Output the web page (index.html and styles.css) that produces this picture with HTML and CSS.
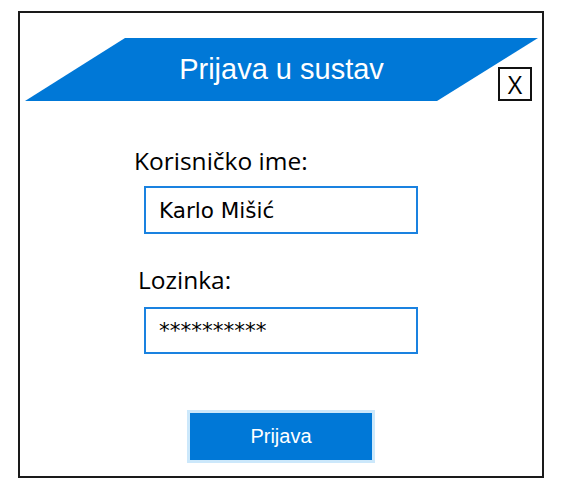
FILE: index.html
```html
<!DOCTYPE html>
<html lang="hr">
<head>
<meta charset="utf-8">
<title>Prijava u sustav</title>
<link rel="stylesheet" href="styles.css">
</head>
<body>
<div class="frame">
  <div class="header"><span class="title">Prijava u sustav</span></div>
  <button class="close" type="button">X</button>
  <label class="label label-user" for="user">Korisničko ime:</label>
  <input class="field" id="user" type="text" value="Karlo Mišić" readonly>
  <label class="label label-pass" for="pass">Lozinka:</label>
  <input class="field field-pass" id="pass" type="text" value="**********" readonly>
  <button class="submit" type="button">Prijava</button>
</div>
</body>
</html>
```

FILE: styles.css
```css
html, body {
  margin: 0;
  padding: 0;
  background: #ffffff;
}

body {
  padding: 11px 0 0 18px;
}

.frame {
  position: relative;
  box-sizing: border-box;
  width: 526px;
  height: 467px;
  border: 2px solid #1a1a1a;
  display: flex;
  flex-direction: column;
  align-items: center;
}

.header {
  align-self: flex-start;
  margin: 25px 0 0 5px;
  width: 513px;
  height: 63px;
  background: #0078d7;
  clip-path: polygon(100px 0, 100% 0, 412px 100%, 0 100%);
  display: flex;
  align-items: center;
  justify-content: center;
}

.title {
  font-family: "Liberation Sans", Arial, sans-serif;
  font-size: 29px;
  color: #ffffff;
  line-height: 1.15;
}

.close {
  position: absolute;
  left: 478px;
  top: 54px;
  box-sizing: border-box;
  width: 34px;
  height: 34px;
  margin: 0;
  padding: 0;
  border: 2px solid #111111;
  background: #ffffff;
  font-family: "Open Sans", "Noto Sans", sans-serif;
  font-size: 25px;
  line-height: 30px;
  color: #000000;
}

.label {
  align-self: flex-start;
  font-family: "Open Sans", "Noto Sans", sans-serif;
  font-size: 24.5px;
  line-height: 33px;
  color: #000000;
}

.label-user {
  margin: 43px 0 0 114px;
}

.label-pass {
  margin: 29px 0 0 118px;
}

.field {
  box-sizing: border-box;
  width: 274px;
  height: 48px;
  margin: 9px 0 0 0;
  padding: 0 13px;
  border: 2px solid #1a82e0;
  border-radius: 0;
  outline: none;
  background: #ffffff;
  font-family: "DejaVu Sans", sans-serif;
  font-size: 21.5px;
  color: #000000;
}

.field-pass {
  height: 47px;
  margin-top: 11px;
}

.submit {
  box-sizing: border-box;
  width: 188px;
  height: 53px;
  margin: 56px 0 0 0;
  padding: 0;
  border: 3px solid #cce8fb;
  border-radius: 0;
  background: #0078d7;
  font-family: "Liberation Sans", Arial, sans-serif;
  font-size: 20px;
  color: #ffffff;
}
```
